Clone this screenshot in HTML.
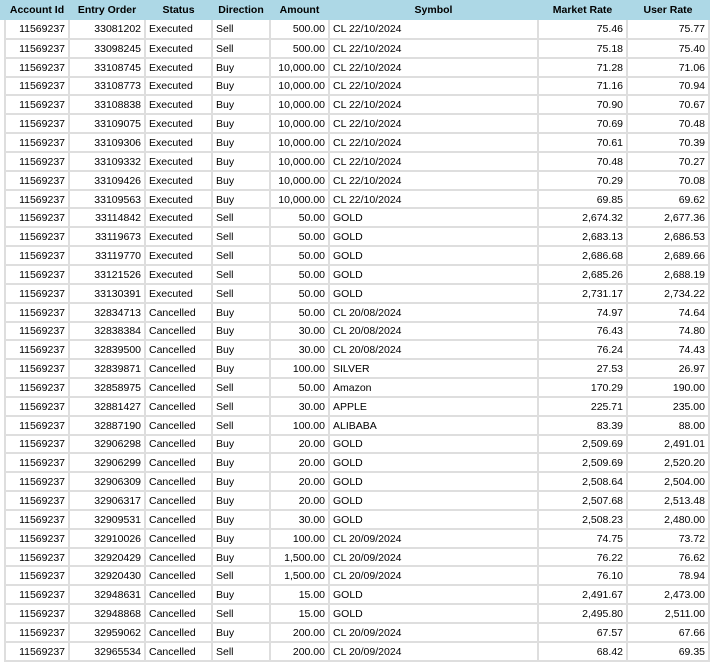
<!DOCTYPE html>
<html><head><meta charset="utf-8"><style>
body{margin:0;background:#fff;width:714px;height:667px;overflow:hidden;font-family:"Liberation Sans",Arial,sans-serif;font-size:10.5px;color:#000}
.hdr{position:absolute;left:0;top:0;width:710px;height:20px;background:#add8e6}
table{position:absolute;left:4px;top:0;border-collapse:collapse;table-layout:fixed}
td,th{padding:0 3px;white-space:nowrap;overflow:hidden;line-height:12px;vertical-align:middle}
th{height:20px;font-weight:bold;text-align:center;border:none;padding:0 2px;box-sizing:border-box}
td{height:18.85px;border:2px solid #dedede;border-top:0;padding-top:1px;padding-bottom:0;box-sizing:border-box}
.r{text-align:right}
</style></head><body>
<div class="hdr"></div>
<table>
<colgroup><col style="width:64px"><col style="width:76px"><col style="width:67px"><col style="width:58px"><col style="width:59px"><col style="width:209px"><col style="width:89px"><col style="width:82px"></colgroup>
<tr><th>Account Id</th><th>Entry Order</th><th>Status</th><th>Direction</th><th>Amount</th><th>Symbol</th><th>Market Rate</th><th>User Rate</th></tr>
<tr><td class="r">11569237</td><td class="r">33081202</td><td>Executed</td><td>Sell</td><td class="r">500.00</td><td>CL 22/10/2024</td><td class="r">75.46</td><td class="r">75.77</td></tr>
<tr><td class="r">11569237</td><td class="r">33098245</td><td>Executed</td><td>Sell</td><td class="r">500.00</td><td>CL 22/10/2024</td><td class="r">75.18</td><td class="r">75.40</td></tr>
<tr><td class="r">11569237</td><td class="r">33108745</td><td>Executed</td><td>Buy</td><td class="r">10,000.00</td><td>CL 22/10/2024</td><td class="r">71.28</td><td class="r">71.06</td></tr>
<tr><td class="r">11569237</td><td class="r">33108773</td><td>Executed</td><td>Buy</td><td class="r">10,000.00</td><td>CL 22/10/2024</td><td class="r">71.16</td><td class="r">70.94</td></tr>
<tr><td class="r">11569237</td><td class="r">33108838</td><td>Executed</td><td>Buy</td><td class="r">10,000.00</td><td>CL 22/10/2024</td><td class="r">70.90</td><td class="r">70.67</td></tr>
<tr><td class="r">11569237</td><td class="r">33109075</td><td>Executed</td><td>Buy</td><td class="r">10,000.00</td><td>CL 22/10/2024</td><td class="r">70.69</td><td class="r">70.48</td></tr>
<tr><td class="r">11569237</td><td class="r">33109306</td><td>Executed</td><td>Buy</td><td class="r">10,000.00</td><td>CL 22/10/2024</td><td class="r">70.61</td><td class="r">70.39</td></tr>
<tr><td class="r">11569237</td><td class="r">33109332</td><td>Executed</td><td>Buy</td><td class="r">10,000.00</td><td>CL 22/10/2024</td><td class="r">70.48</td><td class="r">70.27</td></tr>
<tr><td class="r">11569237</td><td class="r">33109426</td><td>Executed</td><td>Buy</td><td class="r">10,000.00</td><td>CL 22/10/2024</td><td class="r">70.29</td><td class="r">70.08</td></tr>
<tr><td class="r">11569237</td><td class="r">33109563</td><td>Executed</td><td>Buy</td><td class="r">10,000.00</td><td>CL 22/10/2024</td><td class="r">69.85</td><td class="r">69.62</td></tr>
<tr><td class="r">11569237</td><td class="r">33114842</td><td>Executed</td><td>Sell</td><td class="r">50.00</td><td>GOLD</td><td class="r">2,674.32</td><td class="r">2,677.36</td></tr>
<tr><td class="r">11569237</td><td class="r">33119673</td><td>Executed</td><td>Sell</td><td class="r">50.00</td><td>GOLD</td><td class="r">2,683.13</td><td class="r">2,686.53</td></tr>
<tr><td class="r">11569237</td><td class="r">33119770</td><td>Executed</td><td>Sell</td><td class="r">50.00</td><td>GOLD</td><td class="r">2,686.68</td><td class="r">2,689.66</td></tr>
<tr><td class="r">11569237</td><td class="r">33121526</td><td>Executed</td><td>Sell</td><td class="r">50.00</td><td>GOLD</td><td class="r">2,685.26</td><td class="r">2,688.19</td></tr>
<tr><td class="r">11569237</td><td class="r">33130391</td><td>Executed</td><td>Sell</td><td class="r">50.00</td><td>GOLD</td><td class="r">2,731.17</td><td class="r">2,734.22</td></tr>
<tr><td class="r">11569237</td><td class="r">32834713</td><td>Cancelled</td><td>Buy</td><td class="r">50.00</td><td>CL 20/08/2024</td><td class="r">74.97</td><td class="r">74.64</td></tr>
<tr><td class="r">11569237</td><td class="r">32838384</td><td>Cancelled</td><td>Buy</td><td class="r">30.00</td><td>CL 20/08/2024</td><td class="r">76.43</td><td class="r">74.80</td></tr>
<tr><td class="r">11569237</td><td class="r">32839500</td><td>Cancelled</td><td>Buy</td><td class="r">30.00</td><td>CL 20/08/2024</td><td class="r">76.24</td><td class="r">74.43</td></tr>
<tr><td class="r">11569237</td><td class="r">32839871</td><td>Cancelled</td><td>Buy</td><td class="r">100.00</td><td>SILVER</td><td class="r">27.53</td><td class="r">26.97</td></tr>
<tr><td class="r">11569237</td><td class="r">32858975</td><td>Cancelled</td><td>Sell</td><td class="r">50.00</td><td>Amazon</td><td class="r">170.29</td><td class="r">190.00</td></tr>
<tr><td class="r">11569237</td><td class="r">32881427</td><td>Cancelled</td><td>Sell</td><td class="r">30.00</td><td>APPLE</td><td class="r">225.71</td><td class="r">235.00</td></tr>
<tr><td class="r">11569237</td><td class="r">32887190</td><td>Cancelled</td><td>Sell</td><td class="r">100.00</td><td>ALIBABA</td><td class="r">83.39</td><td class="r">88.00</td></tr>
<tr><td class="r">11569237</td><td class="r">32906298</td><td>Cancelled</td><td>Buy</td><td class="r">20.00</td><td>GOLD</td><td class="r">2,509.69</td><td class="r">2,491.01</td></tr>
<tr><td class="r">11569237</td><td class="r">32906299</td><td>Cancelled</td><td>Buy</td><td class="r">20.00</td><td>GOLD</td><td class="r">2,509.69</td><td class="r">2,520.20</td></tr>
<tr><td class="r">11569237</td><td class="r">32906309</td><td>Cancelled</td><td>Buy</td><td class="r">20.00</td><td>GOLD</td><td class="r">2,508.64</td><td class="r">2,504.00</td></tr>
<tr><td class="r">11569237</td><td class="r">32906317</td><td>Cancelled</td><td>Buy</td><td class="r">20.00</td><td>GOLD</td><td class="r">2,507.68</td><td class="r">2,513.48</td></tr>
<tr><td class="r">11569237</td><td class="r">32909531</td><td>Cancelled</td><td>Buy</td><td class="r">30.00</td><td>GOLD</td><td class="r">2,508.23</td><td class="r">2,480.00</td></tr>
<tr><td class="r">11569237</td><td class="r">32910026</td><td>Cancelled</td><td>Buy</td><td class="r">100.00</td><td>CL 20/09/2024</td><td class="r">74.75</td><td class="r">73.72</td></tr>
<tr><td class="r">11569237</td><td class="r">32920429</td><td>Cancelled</td><td>Buy</td><td class="r">1,500.00</td><td>CL 20/09/2024</td><td class="r">76.22</td><td class="r">76.62</td></tr>
<tr><td class="r">11569237</td><td class="r">32920430</td><td>Cancelled</td><td>Sell</td><td class="r">1,500.00</td><td>CL 20/09/2024</td><td class="r">76.10</td><td class="r">78.94</td></tr>
<tr><td class="r">11569237</td><td class="r">32948631</td><td>Cancelled</td><td>Buy</td><td class="r">15.00</td><td>GOLD</td><td class="r">2,491.67</td><td class="r">2,473.00</td></tr>
<tr><td class="r">11569237</td><td class="r">32948868</td><td>Cancelled</td><td>Sell</td><td class="r">15.00</td><td>GOLD</td><td class="r">2,495.80</td><td class="r">2,511.00</td></tr>
<tr><td class="r">11569237</td><td class="r">32959062</td><td>Cancelled</td><td>Buy</td><td class="r">200.00</td><td>CL 20/09/2024</td><td class="r">67.57</td><td class="r">67.66</td></tr>
<tr><td class="r">11569237</td><td class="r">32965534</td><td>Cancelled</td><td>Sell</td><td class="r">200.00</td><td>CL 20/09/2024</td><td class="r">68.42</td><td class="r">69.35</td></tr>
</table>
</body></html>
